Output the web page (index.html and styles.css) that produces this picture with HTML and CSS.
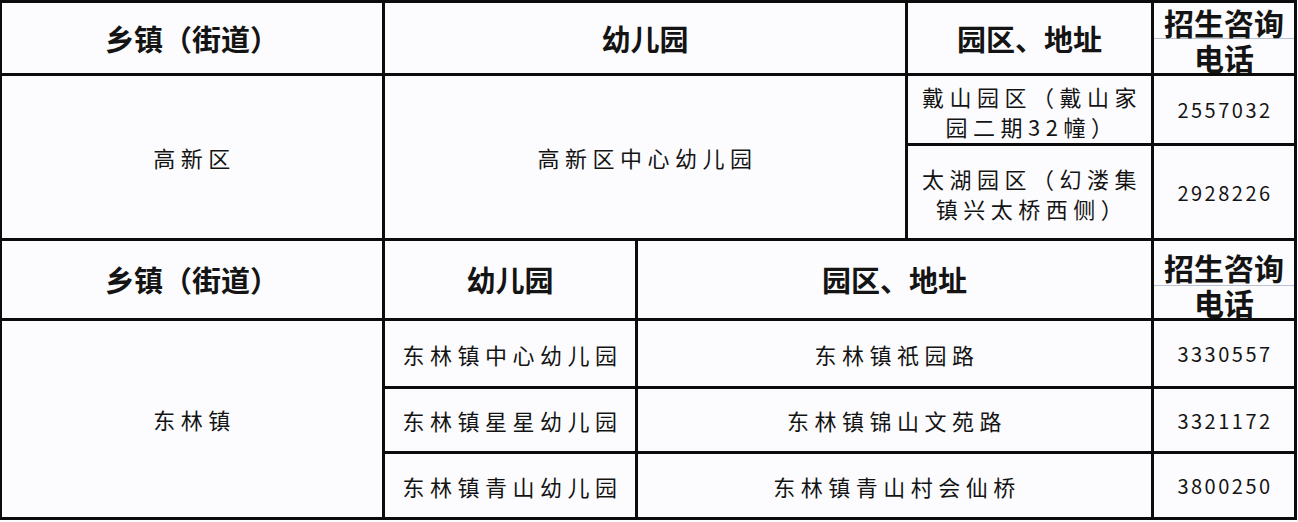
FILE: index.html
```html
<!DOCTYPE html>
<html lang="zh-CN">
<head>
<meta charset="utf-8">
<title>幼儿园招生咨询</title>
<link rel="stylesheet" href="styles.css">
</head>
<body>
<div class="sheet sheet-top">
  <div class="cell head">乡镇（街道）</div>
  <div class="cell head">幼儿园</div>
  <div class="cell head">园区、地址</div>
  <div class="cell head phone-head">
    <span class="ph-top">招生咨询</span>
    <span class="ph-bottom">电话</span>
  </div>

  <div class="cell body span2">高新区</div>
  <div class="cell body span2">高新区中心幼儿园</div>
  <div class="cell body multi">戴山园区（戴山家<br>园二期32幢）</div>
  <div class="cell num">2557032</div>
  <div class="cell body multi">太湖园区（幻溇集<br>镇兴太桥西侧）</div>
  <div class="cell num">2928226</div>
</div>

<div class="sheet sheet-bottom">
  <div class="cell head">乡镇（街道）</div>
  <div class="cell head">幼儿园</div>
  <div class="cell head">园区、地址</div>
  <div class="cell head phone-head phone-head-2">
    <span class="ph-top">招生咨询</span>
    <span class="ph-bottom">电话</span>
  </div>

  <div class="cell body span3">东林镇</div>
  <div class="cell body">东林镇中心幼儿园</div>
  <div class="cell body">东林镇祇园路</div>
  <div class="cell num">3330557</div>
  <div class="cell body">东林镇星星幼儿园</div>
  <div class="cell body">东林镇锦山文苑路</div>
  <div class="cell num">3321172</div>
  <div class="cell body">东林镇青山幼儿园</div>
  <div class="cell body">东林镇青山村会仙桥</div>
  <div class="cell num">3800250</div>
</div>
</body>
</html>
```

FILE: styles.css
```css
html, body {
  margin: 0;
  padding: 0;
  background: #fcfcfe;
}

body {
  width: 1298px;
  height: 522px;
  overflow: hidden;
  font-family: "Noto Sans CJK SC", "Noto Sans", sans-serif;
  color: #141414;
}

.sheet {
  display: grid;
  gap: 3px;
  background: #0c0c0c;
  width: max-content;
}

.sheet-top {
  padding: 3px 3px 3px 2px;
  grid-template-columns: 380px 520px 243px 140px;
  grid-template-rows: 70px 67px 92px;
}

.sheet-bottom {
  padding: 0 3px 3px 2px;
  grid-template-columns: 380px 250px 513px 140px;
  grid-template-rows: 77px 65px 62px 63px;
}

.cell {
  background: #fcfcfe;
  display: flex;
  align-items: center;
  justify-content: center;
  text-align: center;
  overflow: hidden;
}

.head {
  font-size: 29px;
  font-weight: 700;
  line-height: 1;
}

.body {
  font-size: 22px;
  letter-spacing: 5.5px;
  line-height: 30px;
  padding-left: 5px;
}

.multi {
  padding-top: 2px;
}

.num {
  font-size: 20px;
  letter-spacing: 2.5px;
  padding-left: 2px;
}

.span2 {
  grid-row: span 2;
}

.span3 {
  grid-row: span 3;
}

.phone-head {
  flex-direction: column;
  align-items: stretch;
  justify-content: flex-start;
  font-size: 30px;
  line-height: 30px;
}

.ph-top {
  height: 36px;
  box-sizing: border-box;
  display: flex;
  align-items: center;
  justify-content: center;
  padding-top: 3px;
  border-bottom: 1px solid #b9c3d3;
}

.ph-bottom {
  height: 33px;
  box-sizing: border-box;
  display: flex;
  align-items: center;
  justify-content: center;
  padding-top: 2px;
}

.phone-head-2 .ph-top {
  height: 45px;
  padding-top: 8px;
}

.phone-head-2 .ph-bottom {
  height: 31px;
  padding-top: 0;
}
```
